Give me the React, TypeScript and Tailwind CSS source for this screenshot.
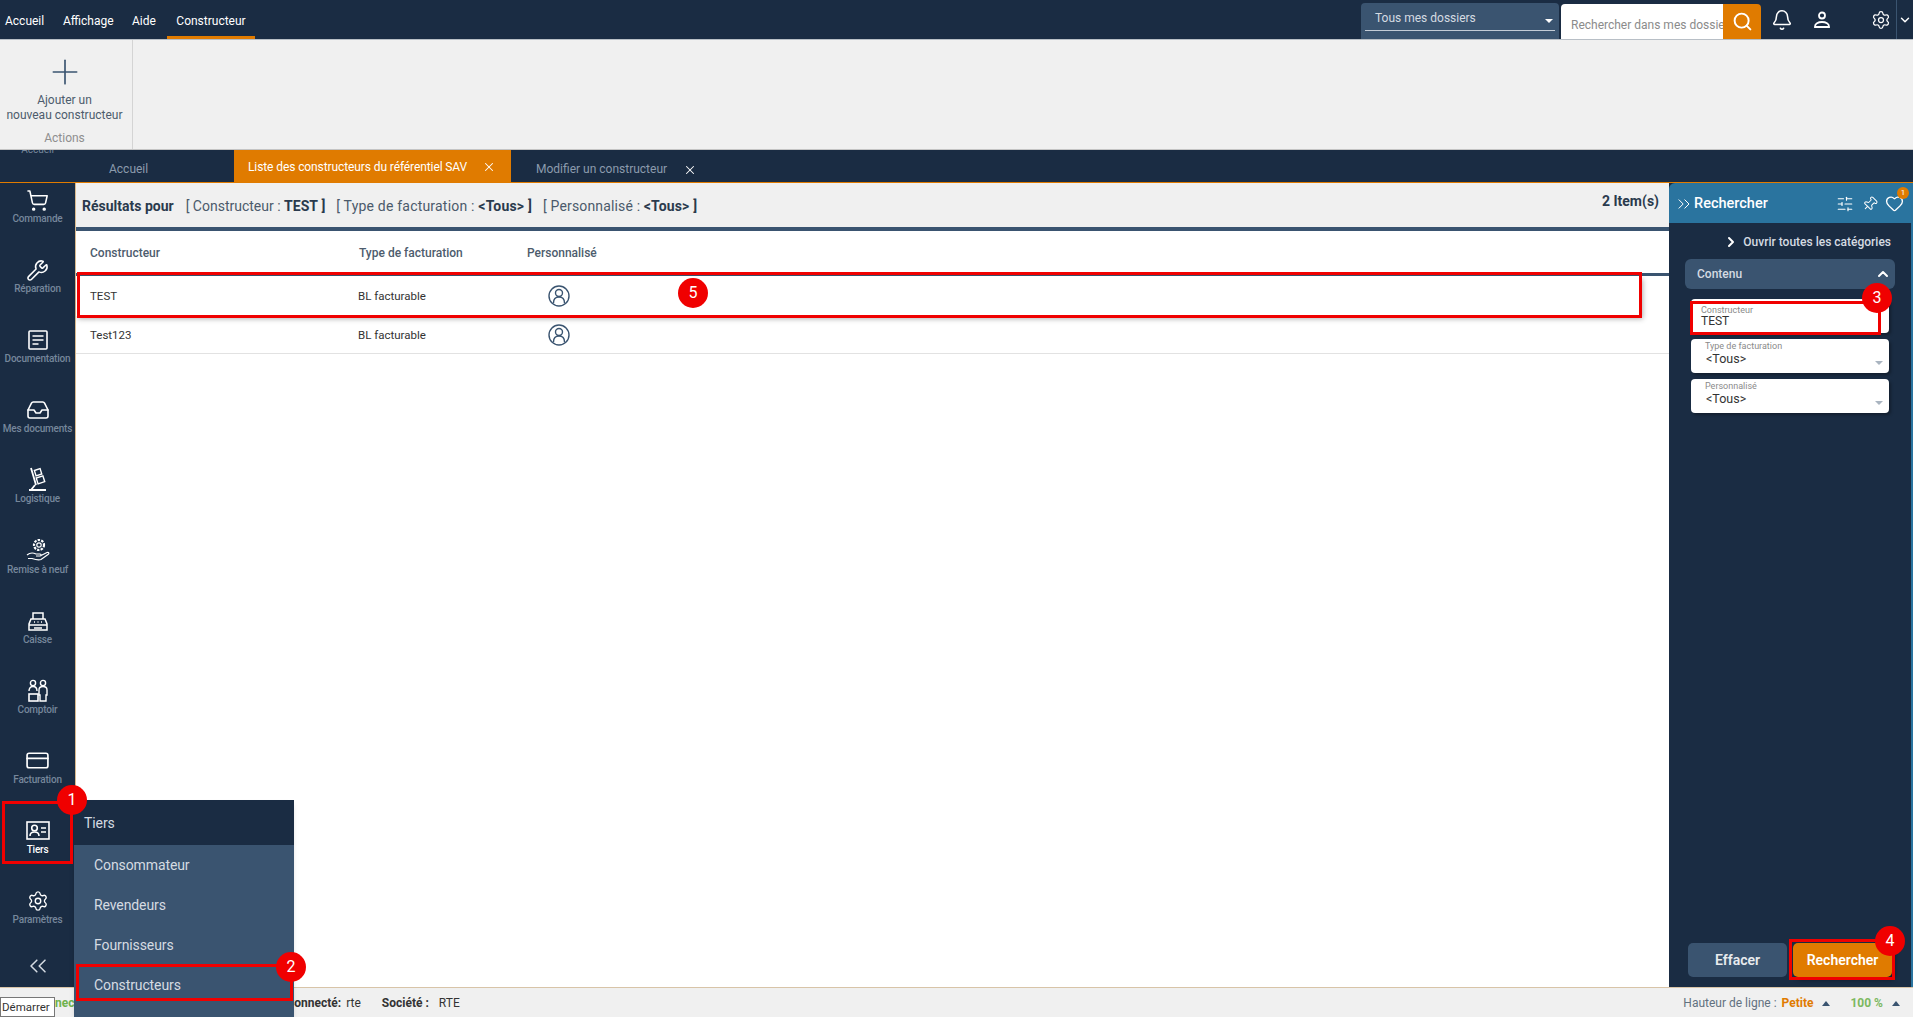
import { ReactNode } from "react";
import {
  Bell,
  ChevronDown,
  ChevronRight,
  ChevronUp,
  ChevronsLeft,
  ChevronsRight,
  CreditCard,
  Heart,
  Inbox,
  Pin,
  Plus,
  Search,
  Settings,
  ShoppingCart,
  SlidersHorizontal,
  Wrench,
  X,
} from "lucide-react";

const DocIcon = () => (
  <svg width="22" height="22" viewBox="0 0 22 22" fill="none" stroke="currentColor" strokeWidth="1.6">
    <rect x="2" y="2" width="18" height="18" rx="1" />
    <path d="M5.5 7h11M5.5 11h11M5.5 15h6" />
  </svg>
);

const TruckIcon = () => (
  <svg width="24" height="26" viewBox="0 0 24 26" fill="none" stroke="currentColor" strokeWidth="1.4">
    <path d="M5 1l5 17M3 23h17M9 18l-4 5" strokeWidth="1.8" />
    <rect x="9" y="2.5" width="6" height="5.5" transform="rotate(-18 12 5)" />
    <rect x="11" y="10" width="7" height="6" transform="rotate(-18 14 13)" />
  </svg>
);

const RefurbIcon = () => (
  <svg width="26" height="26" viewBox="0 0 26 26" fill="none" stroke="currentColor" strokeWidth="1.2">
    <circle cx="14" cy="7" r="2.2" />
    <circle cx="14" cy="7" r="5" strokeDasharray="2.4 1.2" strokeWidth="2.2" />
    <path d="M2 17c3-2.5 6-2.5 9-1h4c1.5 0 1.5 2 0 2h-4M16 17.5l6-3c2-.5 2.5 1 1 2l-7 5c-3 1-6 0-9-1H3" />
  </svg>
);

const RegisterIcon = () => (
  <svg width="22" height="22" viewBox="0 0 22 22" fill="none" stroke="currentColor" strokeWidth="1.5">
    <path d="M6 9V3h10v6" />
    <path d="M4 9h14l2 5v6H2v-6z" />
    <path d="M2 15h18M7 18h8M7 12h1M10.5 12h1M14 12h1" />
  </svg>
);

const CounterIcon = () => (
  <svg width="22" height="24" viewBox="0 0 22 24" fill="none" stroke="currentColor" strokeWidth="1.4">
    <circle cx="6" cy="4" r="2.6" />
    <circle cx="16" cy="4" r="2.6" />
    <path d="M2 12c0-3 1.5-4.5 4-4.5S10 9 10 12M13 22v-6h-1v-5c0-2 1.5-3.5 4-3.5s4 1.5 4 3.5v5h-1v6z" />
    <rect x="2" y="15" width="9" height="7" strokeWidth="1.6" />
  </svg>
);

const IdCardIcon = () => (
  <svg width="24" height="20" viewBox="0 0 24 20" fill="none" stroke="currentColor" strokeWidth="1.6">
    <rect x="1" y="1" width="22" height="17" />
    <circle cx="8.5" cy="7" r="2.8" />
    <path d="M4 15c0-3 2-4 4.5-4s4.5 1 4.5 4M15 7h5M15 11h5" />
  </svg>
);

const AccountIcon = () => (
  <svg width="20" height="20" viewBox="0 0 20 20" fill="none" stroke="currentColor" strokeWidth="1.8">
    <circle cx="10" cy="5.5" r="3" />
    <path d="M3 16.5c0-2.5 3-4.500 7-4.500s7 2 7 4.500v.5H3z" />
  </svg>
);

const PersonCircle = () => (
  <svg width="22" height="22" viewBox="0 0 22 22" fill="none" stroke="#3a5470" strokeWidth="1.4">
    <circle cx="11" cy="11" r="10" />
    <circle cx="11" cy="8" r="3.5" />
    <path d="M5.5 18c0-3.5 2-6 5.5-6s5.500 2.500 5.500 6" />
  </svg>
);

const sideItems: { label: string; icon: ReactNode }[] = [
  { label: "Commande", icon: <ShoppingCart size={23} strokeWidth={1.6} /> },
  { label: "Réparation", icon: <Wrench size={23} strokeWidth={1.6} /> },
  { label: "Documentation", icon: <DocIcon /> },
  { label: "Mes documents", icon: <Inbox size={24} strokeWidth={1.6} /> },
  { label: "Logistique", icon: <TruckIcon /> },
  { label: "Remise à neuf", icon: <RefurbIcon /> },
  { label: "Caisse", icon: <RegisterIcon /> },
  { label: "Comptoir", icon: <CounterIcon /> },
  { label: "Facturation", icon: <CreditCard size={25} strokeWidth={1.6} /> },
];

const SideItem = ({ label, icon, active }: { label: string; icon: ReactNode; active?: boolean }) => (
  <div className="h-[70.1px] flex flex-col items-center justify-end shrink-0 text-white">
    <div className="h-[26px] flex items-center justify-center">{icon}</div>
    <div className={`text-[10px] leading-[14px] -mt-[1px] mb-[8px] font-medium whitespace-nowrap tracking-[-0.2px] ${active ? "text-white" : "text-[#76879b]"}`}>
      {label}
    </div>
  </div>
);

const Field = ({ label, value }: { label: string; value: string }) => (
  <div className="relative h-[34px] mx-[6px] bg-white rounded-[4px] pl-[14px] pt-[2px] shadow-[2px_2px_3px_rgba(0,0,0,0.3)]">
    <div className="text-[9px] leading-[10px] text-[#8a8a8a]">{label}</div>
    <div className="text-[12.5px] leading-[13px] text-[#333] ml-[1px] mt-[1px]">{value}</div>
    <div className="absolute right-[6px] bottom-[8px] w-0 h-0 border-x-[4px] border-x-transparent border-t-[4px] border-t-[#a9b4c0]" />
  </div>
);

const Badge = ({ n, className }: { n: number; className: string }) => (
  <div className={`absolute w-[30px] h-[30px] rounded-full bg-[#f00000] text-white text-[16px] flex items-center justify-center ${className}`}>
    {n}
  </div>
);

const Row = ({ name, className }: { name: string; className: string }) => (
  <div className={`flex items-center text-[11.5px] text-[#333] pl-[14px] ${className}`}>
    <div className="w-[268px] pt-[2px]">{name}</div>
    <div className="w-[190px] pt-[2px]">BL facturable</div>
    <PersonCircle />
  </div>
);

export default function App() {
  return (
    <div className="relative h-screen flex flex-col overflow-hidden bg-white font-['Roboto',sans-serif]">
      {/* barre du haut */}
      <header className="h-[40px] shrink-0 bg-[#1a2c43] flex border-b border-[#b8bfc6] text-[12px] text-white">
        <nav className="flex">
          <div className="pl-[5px] w-[63px] leading-[42px]">Accueil</div>
          <div className="w-[69px] leading-[42px]">Affichage</div>
          <div className="w-[35px] leading-[42px]">Aide</div>
          <div className="w-[88px] text-center leading-[42px] border-b-[3px] border-[#e07b00]">Constructeur</div>
        </nav>
        <div className="ml-auto flex h-full items-end">
          <div className="relative w-[198px] h-[36px] bg-[#3a5470] rounded-t-[4px] pl-[14px] pt-[6px] text-[#d5dbe2]">
            Tous mes dossiers
            <div className="absolute left-[4px] right-[4px] bottom-[8px] h-px bg-[#c3ccd6]" />
            <div className="absolute right-[6px] top-[16px] w-0 h-0 border-x-[4px] border-x-transparent border-t-[4px] border-t-white" />
          </div>
          <div className="ml-[2px] w-[162px] h-[35px] bg-white rounded-tl-[4px] pl-[10px] pt-[12px] text-[#8b8b8b] overflow-hidden whitespace-nowrap">
            Rechercher dans mes dossiers
          </div>
          <div className="w-[38px] h-[35px] bg-[#e07b00] rounded-tr-[4px] flex items-center justify-center">
            <Search size={21} strokeWidth={2.2} />
          </div>
          <div className="w-[42px] h-full flex items-center justify-center"><Bell size={22} strokeWidth={1.7} /></div>
          <div className="w-[38px] h-full flex items-center justify-center"><AccountIcon /></div>
          <div className="w-[55px] h-full flex items-center justify-end pr-[5px]"><Settings size={20} strokeWidth={1.5} /></div>
          <div className="w-[17px] h-full border-l border-[#3a5470] flex items-center justify-center"><ChevronDown size={14} strokeWidth={2.5} /></div>
        </div>
      </header>

      {/* ruban */}
      <div className="h-[110px] shrink-0 bg-[#f0f0f0] border-b border-[#c4c4c4] flex">
        <div className="w-[133px] border-r border-[#d4d4d4] pr-[3px] flex flex-col items-center text-[12px] leading-[15px] text-[#4d5c6d]">
          <Plus size={40} strokeWidth={1} className="text-[#3a5470] mt-[12px]" />
          <div className="mt-[1px]">Ajouter un</div>
          <div className="whitespace-nowrap">nouveau constructeur</div>
          <div className="mt-[8px] text-[#8e8e8e]">Actions</div>
        </div>
      </div>

      {/* onglets */}
      <div className="h-[33px] shrink-0 bg-[#1a2c43] flex border-b border-[#e07b00] text-[12px]">
        <div className="w-[75px] h-[4px] overflow-hidden text-[10px] leading-[0px] text-center text-[#76879b]">Accueil</div>
        <div className="w-[159px] pl-[34px] pt-[10px] text-[#8c9bad]">Accueil</div>
        <div className="w-[277px] bg-[#e07b00] text-white flex items-center pl-[14px] pt-[2px] tracking-[-0.1px]">
          Liste des constructeurs du référentiel SAV
          <X size={14} strokeWidth={1.8} className="ml-[15px]" />
        </div>
        <div className="pl-[25px] pt-[10px] text-[#8c9bad]">Modifier un constructeur</div>
        <X size={14} strokeWidth={1.8} className="ml-[16px] mt-[13px] text-white" />
      </div>

      <div className="flex-1 flex min-h-0">
        {/* menu lateral */}
        <aside className="w-[76px] shrink-0 bg-[#1a2c43] border-r border-[#d9b98d] flex flex-col overflow-hidden">
          <div className="-mt-[19px] flex flex-col">
            {sideItems.map((item) => (
              <SideItem key={item.label} label={item.label} icon={item.icon} />
            ))}
            <SideItem label="Tiers" icon={<IdCardIcon />} active />
            <SideItem label="Paramètres" icon={<Settings size={22} strokeWidth={1.5} />} />
            <div className="flex justify-center text-[#d5dbe2] mt-[17px]">
              <ChevronsLeft size={28} strokeWidth={1.3} />
            </div>
          </div>
        </aside>

        {/* resultats */}
        <main className="flex-1 min-w-0 flex flex-col">
          <div className="h-[48px] shrink-0 bg-[#f0f0f0] border-b-[4px] border-[#3a5470] flex items-start pl-[6px] pr-[10px] text-[14px] text-[#4b5a6b]">
            <div className="pt-[13px] whitespace-nowrap">
              <span className="font-bold text-[#2a3a4d]">Résultats pour</span>
              <span className="ml-[12px]">[ Constructeur : <b className="text-[#2a3a4d]">TEST</b> <b className="text-[#2a3a4d]">]</b></span>
              <span className="ml-[11px] tracking-[0.2px]">[ Type de facturation : <b className="text-[#2a3a4d]">&lt;Tous&gt;</b> <b className="text-[#2a3a4d]">]</b></span>
              <span className="ml-[11px] tracking-[0.15px]">[ Personnalisé : <b className="text-[#2a3a4d]">&lt;Tous&gt;</b> <b className="text-[#2a3a4d]">]</b></span>
            </div>
            <div className="ml-auto pt-[8px] font-bold text-[#2a3a4d]">2 Item(s)</div>
          </div>
          <div className="h-[45px] shrink-0 border-b-[3px] border-[#3a5470] flex items-center pl-[14px] pt-[2px] text-[12px] font-medium text-[#4d5c6d]">
            <div className="w-[269px]">Constructeur</div>
            <div className="w-[168px]">Type de facturation</div>
            <div>Personnalisé</div>
          </div>
          <div className="shadow-[2px_3px_5px_rgba(0,0,0,0.3)] mr-[28px]">
            <Row name="TEST" className="h-[40px]" />
          </div>
          <Row name="Test123" className="h-[38px] border-b border-[#e2e2e2]" />
        </main>

        {/* panneau de recherche */}
        <aside className="w-[244px] shrink-0 bg-[#1a2c43] border-r-2 border-[#2a749f] flex flex-col">
          <div className="h-[40px] shrink-0 bg-[#2a749f] rounded-tl-[6px] flex items-center text-white -mr-[2px] pl-[5px] pr-[9px] pt-[1px]">
            <ChevronsRight size={20} strokeWidth={1.2} />
            <span className="text-[14.5px] font-medium">Rechercher</span>
            <SlidersHorizontal size={18} strokeWidth={1.5} className="ml-auto" />
            <Pin size={16} strokeWidth={1.5} className="ml-[8px] rotate-45" />
            <div className="relative ml-[7px]">
              <Heart size={19} strokeWidth={1.7} />
              <div className="absolute -top-[7px] -right-[5px] w-[12px] h-[12px] rounded-full bg-[#e07b00] text-[8px] leading-[12px] text-center">1</div>
            </div>
          </div>
          <div className="pt-[10px] pr-[20px] flex justify-end items-center text-[12px] font-medium text-[#d5dbe2]">
            <ChevronRight size={16} strokeWidth={3} className="text-white mr-[4px]" />
            Ouvrir toutes les catégories
          </div>
          <div className="mt-[8px] mx-[16px] h-[30px] bg-[#3a5470] rounded-[6px] flex items-center justify-between pl-[12px] pr-[4px] text-[12px] font-medium text-[#d5dbe2]">
            Contenu
            <ChevronUp size={16} strokeWidth={3} className="text-white" />
          </div>
          <div className="mt-[10px] mx-[16px] flex flex-col gap-[6px]">
            <div className="relative h-[34px] mx-[6px] bg-white rounded-[4px] pl-[10px] pt-[7px] shadow-[2px_2px_3px_rgba(0,0,0,0.3)]">
              <div className="text-[9px] leading-[9px] text-[#8a8a8a]">Constructeur</div>
              <div className="text-[12px] leading-[12px] text-[#333]">TEST</div>
            </div>
            <Field label="Type de facturation" value="<Tous>" />
            <Field label="Personnalisé" value="<Tous>" />
          </div>
          <div className="mt-auto mb-[10px] ml-[19px] flex gap-[6px] text-[14px] font-semibold text-[#e8ebee]">
            <div className="w-[99px] h-[34px] bg-[#3a5470] rounded-[5px] flex items-center justify-center">Effacer</div>
            <div className="w-[99px] h-[34px] bg-[#e07b00] rounded-[5px] text-white flex items-center justify-center shadow-[3px_3px_4px_rgba(0,0,0,0.4)]">Rechercher</div>
          </div>
        </aside>
      </div>

      {/* barre d'etat */}
      <footer className="h-[30px] shrink-0 bg-[#f0f0f0] border-t border-[#d8c4a8] flex items-center text-[12px] text-[#333] pt-[1px]">
        <span className="ml-[55px] font-bold text-[#6fb24d]">nec</span>
        <b className="ml-[212px]">Connecté:</b>
        <span className="ml-[5px]">rte</span>
        <b className="ml-[21px]">Société :</b>
        <span className="ml-[10px]">RTE</span>
        <span className="ml-auto text-[#62717f]">Hauteur de ligne :</span>
        <b className="ml-[5px] text-[#e07b00]">Petite</b>
        <div className="ml-[9px] w-0 h-0 border-x-[4px] border-x-transparent border-b-[5px] border-b-[#3a5470]" />
        <b className="ml-[20px] text-[#7cb860]">100 %</b>
        <div className="ml-[9px] mr-[13px] w-0 h-0 border-x-[4px] border-x-transparent border-b-[5px] border-b-[#3a5470]" />
      </footer>

      {/* infobulle */}
      <div className="absolute left-0 top-[997px] w-[55px] h-[20px] bg-white border border-[#777] text-[11.5px] leading-[19px] pl-[1px] text-[#333]">Démarrer</div>

      {/* sous-menu Tiers */}
      <div className="absolute left-[74px] top-[800px] w-[220px] h-[217px] bg-[#3a5470] text-[14px] tracking-[-0.1px] text-[#d5dbe2] shadow-md">
        <div className="h-[45px] bg-[#1a2c43] pl-[10px] leading-[46px]">Tiers</div>
        <div className="pl-[20px] leading-[40px]">Consommateur</div>
        <div className="pl-[20px] leading-[40px]">Revendeurs</div>
        <div className="pl-[20px] leading-[40px]">Fournisseurs</div>
        <div className="pl-[20px] leading-[40px]">Constructeurs</div>
      </div>

      {/* annotations */}
      <div className="absolute left-[2px] top-[801px] w-[71px] h-[63px] border-[3px] border-[#f00000]" />
      <div className="absolute left-[76px] top-[964px] w-[217px] h-[37px] border-[3px] border-[#f00000]" />
      <div className="absolute left-[77px] top-[272px] w-[1565px] h-[46px] border-[3px] border-[#f00000]" />
      <div className="absolute left-[1690px] top-[301px] w-[191px] h-[34px] border-[3px] border-[#f00000]" />
      <div className="absolute left-[1789px] top-[939px] w-[106px] h-[41px] border-[3px] border-[#f00000]" />
      <Badge n={1} className="left-[57px] top-[785px]" />
      <Badge n={2} className="left-[276px] top-[952px]" />
      <Badge n={3} className="left-[1862px] top-[283px]" />
      <Badge n={4} className="left-[1875px] top-[926px]" />
      <Badge n={5} className="left-[678px] top-[278px]" />
    </div>
  );
}
